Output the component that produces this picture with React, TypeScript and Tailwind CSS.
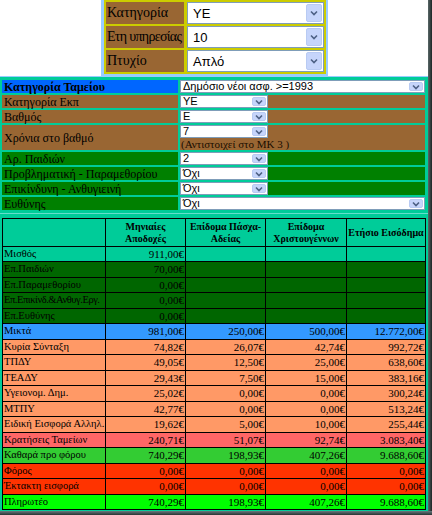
import React from "react";

const serif = "font-['Liberation_Serif','Times_New_Roman',serif]";
const sans = "font-['Liberation_Sans',Arial,sans-serif]";

function Chevron() {
  return (
    <svg width="8" height="6" viewBox="0 0 8 6" aria-hidden>
      <polyline points="1,1.5 4,4.5 7,1.5" fill="none" stroke="#4d6185" strokeWidth="1.6" />
    </svg>
  );
}

function Select({ value, className = "", size = "sm" }: { value: string; className?: string; size?: "sm" | "lg" }) {
  const big = size === "lg";
  return (
    <div
      className={`flex items-stretch border border-[#7f9db9] bg-white ${sans} ${
        big ? "h-[21px] text-[13px]" : "h-[13px] text-[11px]"
      } ${className}`}
    >
      <span className={`flex flex-1 items-center truncate leading-none text-black ${big ? "pl-[5px]" : "pl-[2px]"}`}>{value}</span>
      <span
        className={`m-px flex items-center justify-center rounded-[2px] border border-[#b9cbf3] bg-[#c6d5fb] ${
          big ? "w-[16px]" : "w-[14px]"
        }`}
      >
        <Chevron />
      </span>
    </div>
  );
}

const topRows = [
  { label: "Κατηγορία", value: "YE", tight: false },
  { label: "Ετη υπηρεσίας", value: "10", tight: true },
  { label: "Πτυχίο", value: "Απλό", tight: false },
];

type Row = { label: string; bg: string; values: string[]; tight?: boolean };

const rows: Row[] = [
  { label: "Μισθός", bg: "bg-[#00cc99]", values: ["911,00€", "", "", ""] },
  { label: "Επ.Παιδιών", bg: "bg-[#006600]", values: ["70,00€", "", "", ""] },
  { label: "Επ.Παραμεθορίου", bg: "bg-[#006600]", values: ["0,00€", "", "", ""] },
  { label: "Επ.Επικίνδ.&Ανθυγ.Εργ.", bg: "bg-[#006600]", values: ["0,00€", "", "", ""], tight: true },
  { label: "Επ.Ευθύνης", bg: "bg-[#006600]", values: ["0,00€", "", "", ""] },
  { label: "Μικτά", bg: "bg-[#3399ff]", values: ["981,00€", "250,00€", "500,00€", "12.772,00€"] },
  { label: "Κυρία Σύνταξη", bg: "bg-[#ff9966]", values: ["74,82€", "26,07€", "42,74€", "992,72€"] },
  { label: "ΤΠΔΥ", bg: "bg-[#ff9966]", values: ["49,05€", "12,50€", "25,00€", "638,60€"] },
  { label: "ΤΕΑΔΥ", bg: "bg-[#ff9966]", values: ["29,43€", "7,50€", "15,00€", "383,16€"] },
  { label: "Υγειονομ. Δημ.", bg: "bg-[#ff9966]", values: ["25,02€", "0,00€", "0,00€", "300,24€"] },
  { label: "ΜΤΠΥ", bg: "bg-[#ff9966]", values: ["42,77€", "0,00€", "0,00€", "513,24€"] },
  { label: "Ειδική Εισφορά Αλληλ.", bg: "bg-[#ff9966]", values: ["19,62€", "5,00€", "10,00€", "255,44€"] },
  { label: "Κρατήσεις Ταμείων", bg: "bg-[#ff6666]", values: ["240,71€", "51,07€", "92,74€", "3.083,40€"] },
  { label: "Καθαρά προ φόρου", bg: "bg-[#33cc33]", values: ["740,29€", "198,93€", "407,26€", "9.688,60€"] },
  { label: "Φόρος", bg: "bg-[#ff3300]", values: ["0,00€", "0,00€", "0,00€", "0,00€"] },
  { label: "Έκτακτη εισφορά", bg: "bg-[#ff3300]", values: ["0,00€", "0,00€", "0,00€", "0,00€"] },
  { label: "Πληρωτέο", bg: "bg-[#00ff00]", values: ["740,29€", "198,93€", "407,26€", "9.688,60€"] },
];

const headers = [
  ["Μηνιαίες", "Αποδοχές"],
  ["Επίδομα Πάσχα-", "Αδείας"],
  ["Επίδομα", "Χριστουγέννων"],
  ["Ετήσιο Εισόδημα"],
];

function FormRow({ label, bg, children, tall = false, bold = false }: { label: string; bg: string; children: React.ReactNode; tall?: boolean; bold?: boolean }) {
  return (
    <div className={`grid grid-cols-[176px_1fr] gap-[2px] ${tall ? "h-[25px]" : "h-[13px]"}`}>
      <div className={`flex items-center whitespace-nowrap pl-[2px] text-[12px] leading-none text-black ${serif} ${bg} ${bold ? "font-bold text-[#000033]" : ""}`}>
        {label}
      </div>
      <div className={bg}>{children}</div>
    </div>
  );
}

export default function App() {
  return (
    <div className="relative h-[515px] w-[432px] overflow-hidden bg-white">
      <div className="w-[428px]">
        {/* top selector box */}
        <div className="ml-[101px] w-[227px] border-b-[2px] border-l-[3px] border-r-[2px] border-[#99ccff] bg-[#cccc00] px-[2px] pb-[2px] pt-[2px]">
          <div className="flex flex-col gap-[2px]">
            {topRows.map((r) => (
              <div className="grid h-[22px] grid-cols-[78px_1fr] gap-[3px]" key={r.label}>
                <div
                  className={`flex items-center overflow-hidden whitespace-nowrap bg-[#996633] pl-px text-[14px] leading-none text-black ${serif} ${
                    r.tight ? "tracking-[-0.7px]" : ""
                  }`}
                >
                  {r.label}
                </div>
                <Select className="h-[22px]" size="lg" value={r.value} />
              </div>
            ))}
          </div>
        </div>

        {/* fund / category panel */}
        <div className="border-t border-[#99ccff] bg-[#00cc99] pb-[3px] pl-[2px] pr-[3px] pt-[3px]">
          <div className="flex flex-col gap-[2px]">
            <FormRow bg="bg-[#0066ff]" bold label="Κατηγορία Ταμείου">
              <Select value="Δημόσιο νέοι ασφ. >=1993" />
            </FormRow>
            <FormRow bg="bg-[#996633]" label="Κατηγορία Εκπ">
              <Select className="w-[88px]" value="YE" />
            </FormRow>
            <FormRow bg="bg-[#996633]" label="Βαθμός">
              <Select className="w-[88px]" value="E" />
            </FormRow>
            <FormRow bg="bg-[#996633]" label="Χρόνια στο βαθμό" tall>
              <Select className="w-[88px]" value="7" />
              <div className={`pl-px pt-[1px] text-[11px] leading-[11px] text-[#1a0d00] ${serif}`}>(Αντιστοιχεί στο ΜΚ 3 )</div>
            </FormRow>
            <FormRow bg="bg-[#008000]" label="Αρ. Παιδιών">
              <Select className="w-[88px]" value="2" />
            </FormRow>
            <FormRow bg="bg-[#008000]" label="Προβληματική - Παραμεθορίου">
              <Select className="w-[88px]" value="Όχι" />
            </FormRow>
            <FormRow bg="bg-[#008000]" label="Επικίνδυνη - Ανθυγιεινή">
              <Select className="w-[88px]" value="Όχι" />
            </FormRow>
            <FormRow bg="bg-[#008000]" label="Ευθύνης">
              <Select value="Όχι" />
            </FormRow>
          </div>
        </div>

        {/* results table */}
        <div className="border-t border-[#66ddcc] bg-[#00cc99] pb-[2px] pl-[2px] pr-[2px] pt-[4px]">
          <div className={`grid grid-cols-[102px_79px_79px_80px_78px] gap-px border border-black bg-black text-[11px] leading-none ${serif}`}>
            <div className="h-[27px] bg-[#00cc99]" />
            {headers.map((h) => (
              <div className="flex h-[27px] flex-col items-center justify-center bg-[#00cc99] text-[10px] font-bold leading-[12px] text-black" key={h.join()}>
                {h.map((line) => (
                  <span className="whitespace-nowrap" key={line}>
                    {line}
                  </span>
                ))}
              </div>
            ))}
            {rows.map((r, i) => (
              <React.Fragment key={r.label}>
                <div
                  className={`flex items-center overflow-hidden whitespace-nowrap pl-px text-[10.5px] text-black ${r.bg} ${
                    i % 2 === 0 ? "h-[14px]" : "h-[15px]"
                  } ${r.tight ? "tracking-[-0.45px]" : ""}`}
                >
                  {r.label}
                </div>
                {r.values.map((v, j) => (
                  <div className={`flex items-center justify-end pr-px text-black ${r.bg}`} key={j}>
                    {v}
                  </div>
                ))}
              </React.Fragment>
            ))}
          </div>
        </div>
      </div>

      {/* window drop shadow */}
      <div className="absolute right-0 top-0 h-full w-[4px] bg-gradient-to-r from-[#5a6868] to-[#1c2626]" />
      <div className="absolute bottom-0 left-0 h-[4px] w-full bg-gradient-to-b from-[#6b7a80] to-[#2a3434]" />
    </div>
  );
}
